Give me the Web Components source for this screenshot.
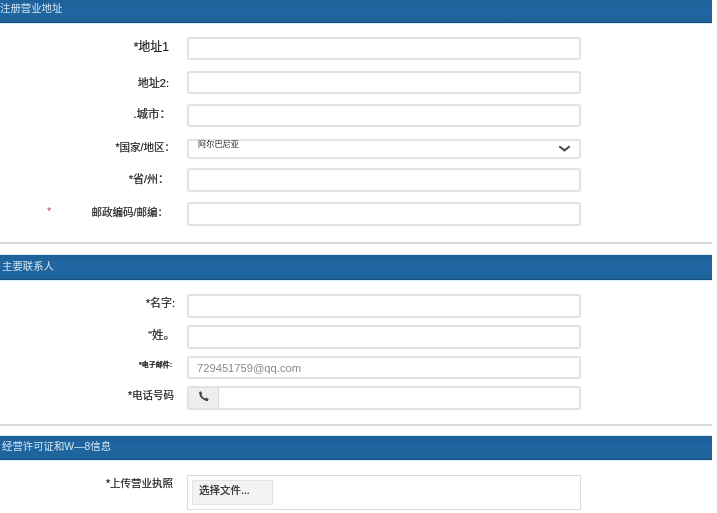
<!DOCTYPE html>
<html lang="zh">
<head>
<meta charset="utf-8">
<title>注册</title>
<style>
  html, body { margin: 0; background: #fff; }
  body {
    width: 712px;
    height: 513px;
    overflow: hidden;
    font-family: "Liberation Sans", "Noto Sans CJK SC", sans-serif;
    color: #333;
    filter: blur(.3px);
  }
</style>
</head>
<body>

<form-section heading="注册营业地址" bar="23" pad="14" end="16" text-x="0" text-lift="4">
  <form-row top="0" height="23" right="18" lift="6" size="12">*地址1<text-field slot="field"></text-field></form-row>
  <form-row top="11" height="23" right="18" lift="2" size="11">地址2:<text-field slot="field"></text-field></form-row>
  <form-row top="10" height="23" right="16" lift="6" size="11.5">.城市：<text-field slot="field"></text-field></form-row>
  <form-row top="12" height="20" right="12" lift="6">*国家/地区：<select-field slot="field" value="阿尔巴尼亚"></select-field></form-row>
  <form-row top="9" height="24" right="18" lift="4" size="11">*省/州：<text-field slot="field"></text-field></form-row>
  <form-row top="10" height="24" right="19" lift="6" mark>邮政编码/邮编：<text-field slot="field"></text-field></form-row>
</form-section>

<form-section heading="主要联系人" bar="25" pad="14" end="14" text-x="2" text-lift="0" style="--sec-top:11px">
  <form-row top="0" height="24" right="12" lift="8" size="11">*名字:<text-field slot="field"></text-field></form-row>
  <form-row top="7" height="24" right="12" lift="7" size="11.5">“姓。<text-field slot="field"></text-field></form-row>
  <form-row top="7" height="23" right="15" lift="8" size="7" weight="700">*电子邮件:<text-field slot="field" value="729451759@qq.com"></text-field></form-row>
  <form-row top="7" height="24" right="13" lift="8">*电话号码<phone-field slot="field"></phone-field></form-row>
</form-section>

<form-section heading="经营许可证和W—8信息" bar="24" pad="15" end="0" text-x="2" text-lift="2" style="--sec-top:10px">
  <form-row top="0" height="35" right="14" lift="0" align="start">*上传营业执照<file-field slot="field" label="选择文件..."></file-field></form-row>
</form-section>

<template id="section-tpl">
  <style>
    :host { display: block; margin-top: var(--sec-top, 0); }
    .bar {
      background: linear-gradient(#1f6099, #1f66a2 45%, #1d6399);
      border-bottom: 1px solid #1b4f78;
      box-shadow: 0 1px 1px #d8f0fb, 0 -1px 1px #d8f0fb;
      color: #cfe2f0;
      font-size: 10.4px;
      line-height: 14px;
      display: flex;
      align-items: center;
      box-sizing: border-box;
    }
    .body { display: flex; flex-direction: column; }
    .rule { height: 2px; background: #d9d9d9; }
  </style>
  <div class="bar"></div>
  <div class="body"><slot></slot></div>
  <div class="rule"></div>
</template>

<template id="row-tpl">
  <style>
    :host { display: flex; color: #222; }
    .label {
      width: 187px;
      flex: none;
      box-sizing: border-box;
      display: flex;
      align-items: center;
      justify-content: flex-end;
      white-space: nowrap;
      font-size: 10.5px;
      -webkit-text-stroke: .2px #222;
    }
    .mark { color: #c0485a; font-size: 11px; margin: 0 auto 0 47px; -webkit-text-stroke: 0; }
    .mark[hidden] { display: none; }
    .field { flex: none; width: 394px; display: flex; }
  </style>
  <div class="label"><span class="mark" hidden>*</span><span><slot></slot></span></div>
  <div class="field"><slot name="field"></slot></div>
</template>

<template id="text-tpl">
  <style>
    :host {
      flex: 1;
      box-sizing: border-box;
      background: #fff;
      border: 2px solid #e2e2e2;
      border-radius: 3px;
      padding-left: 8px;
      font-size: 11.2px;
      color: #8a8a8a;
      display: flex;
      align-items: center;
    }
  </style>
  <span></span>
</template>

<template id="select-tpl">
  <style>
    :host {
      flex: 1;
      box-sizing: border-box;
      background: #fff;
      border: 2px solid #e4e4e4;
      border-radius: 3px;
      padding: 0 8px 0 9px;
      font-size: 8.2px;
      line-height: 8px;
      color: #111;
      display: flex;
      justify-content: space-between;
      align-items: flex-start;
    }
    svg { width: 13px; height: 7px; margin-top: 4px; }
  </style>
  <span></span>
  <svg viewBox="0 0 13 7"><path d="M1.2 1.2 6.5 5.4 11.8 1.2" fill="none" stroke="#4a4a4a" stroke-width="2"/></svg>
</template>

<template id="phone-tpl">
  <style>
    :host {
      flex: 1;
      box-sizing: border-box;
      border: 2px solid #e2e2e2;
      border-radius: 3px;
      display: flex;
      background: #fff;
      overflow: hidden;
    }
    .addon {
      width: 29px;
      flex: none;
      background: #eee;
      border-right: 1px solid #dcdcdc;
      display: flex;
      align-items: center;
      justify-content: center;
    }
    svg { width: 11px; height: 11px; margin-bottom: 3px; }
  </style>
  <div class="addon">
    <svg viewBox="0 0 10 10">
      <path d="M2 1.5C2 5 4.6 8 8.4 8.2" fill="none" stroke="#444" stroke-width="1.7"/>
      <path d="M.9 .9 2.7 .3 3.9 2.6 2.4 3.6Z M6.4 7.1 7.4 5.9 9.7 7.3 8.9 9.2 7 9Z" fill="#444"/>
    </svg>
  </div>
</template>

<template id="file-tpl">
  <style>
    :host {
      flex: 1;
      box-sizing: border-box;
      border: 1px solid #dcdcdc;
      padding: 4px 4px;
      display: flex;
      align-items: flex-start;
      background: #fff;
    }
    .btn {
      width: 81px;
      height: 25px;
      box-sizing: border-box;
      background: #f3f3f3;
      border: 1px solid #e4e4e4;
      font-size: 10.5px;
      color: #222;
      -webkit-text-stroke: .2px #222;
      padding-left: 6px;
      line-height: 18px;
    }
  </style>
  <div class="btn"></div>
</template>

<script>
// each element clones its template into an open shadow root
function shadowFrom(el, id) {
  const root = el.attachShadow({ mode: 'open' })
  root.appendChild(document.getElementById(id).content.cloneNode(true))
  return root
}

class FormSection extends HTMLElement {
  connectedCallback() {
    const root = shadowFrom(this, 'section-tpl')
    const bar = root.querySelector('.bar')
    bar.textContent = this.getAttribute('heading')
    bar.style.height = this.getAttribute('bar') + 'px'
    bar.style.paddingLeft = this.getAttribute('text-x') + 'px'
    bar.style.paddingBottom = this.getAttribute('text-lift') + 'px'
    const body = root.querySelector('.body')
    body.style.paddingTop = this.getAttribute('pad') + 'px'
    body.style.paddingBottom = this.getAttribute('end') + 'px'
    if (this.getAttribute('end') === '0') root.querySelector('.rule').remove()
  }
}

class FormRow extends HTMLElement {
  connectedCallback() {
    const root = shadowFrom(this, 'row-tpl')
    this.style.marginTop = this.getAttribute('top') + 'px'
    this.style.height = this.getAttribute('height') + 'px'
    const label = root.querySelector('.label')
    label.style.paddingRight = this.getAttribute('right') + 'px'
    // labels sit a little above the middle of their field
    label.style.paddingBottom = this.getAttribute('lift') + 'px'
    if (this.hasAttribute('size')) label.style.fontSize = this.getAttribute('size') + 'px'
    if (this.hasAttribute('weight')) label.style.fontWeight = this.getAttribute('weight')
    if (this.getAttribute('align') === 'start') label.style.alignItems = 'flex-start'
    if (this.hasAttribute('mark')) root.querySelector('.mark').hidden = false
  }
}

class TextField extends HTMLElement {
  connectedCallback() {
    shadowFrom(this, 'text-tpl').querySelector('span').textContent = this.getAttribute('value') || ''
  }
}

class SelectField extends HTMLElement {
  connectedCallback() {
    shadowFrom(this, 'select-tpl').querySelector('span').textContent = this.getAttribute('value')
  }
}

class PhoneField extends HTMLElement {
  connectedCallback() {
    shadowFrom(this, 'phone-tpl')
  }
}

class FileField extends HTMLElement {
  connectedCallback() {
    shadowFrom(this, 'file-tpl').querySelector('.btn').textContent = this.getAttribute('label')
  }
}

customElements.define('form-section', FormSection)
customElements.define('form-row', FormRow)
customElements.define('text-field', TextField)
customElements.define('select-field', SelectField)
customElements.define('phone-field', PhoneField)
customElements.define('file-field', FileField)
</script>
</body>
</html>
